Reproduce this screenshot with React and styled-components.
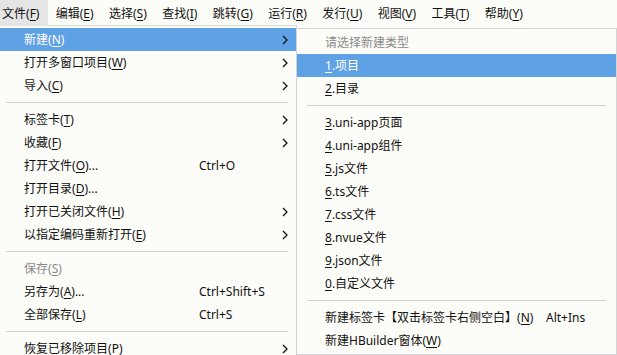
import styled, { createGlobalStyle } from "styled-components";

const GlobalStyle = createGlobalStyle`
  html, body {
    margin: 0;
    background: #fcfcf8;
    overflow: hidden;
  }
  body {
    font-family: "Noto Sans", "Noto Sans CJK SC", sans-serif;
    font-size: 12px;
    color: #111;
  }
`;

const mainItems = [
  { label: "新建", key: "N", arrow: true, active: true },
  { label: "打开多窗口项目", key: "W", arrow: true },
  { label: "导入", key: "C", arrow: true },
  "sep",
  { label: "标签卡", key: "T", arrow: true },
  { label: "收藏", key: "F", arrow: true },
  { label: "打开文件", key: "O", suffix: "...", shortcut: "Ctrl+O" },
  { label: "打开目录", key: "D", suffix: "..." },
  { label: "打开已关闭文件", key: "H", arrow: true },
  { label: "以指定编码重新打开", key: "E", arrow: true },
  "sep",
  { label: "保存", key: "S", disabled: true },
  { label: "另存为", key: "A", suffix: "...", shortcut: "Ctrl+Shift+S" },
  { label: "全部保存", key: "L", shortcut: "Ctrl+S" },
  "sep",
  { label: "恢复已移除项目", key: "P", arrow: true },
];

const subItems = [
  { num: "1", label: ".项目", active: true },
  { num: "2", label: ".目录" },
  "sep",
  { num: "3", label: ".uni-app页面" },
  { num: "4", label: ".uni-app组件" },
  { num: "5", label: ".js文件" },
  { num: "6", label: ".ts文件" },
  { num: "7", label: ".css文件" },
  { num: "8", label: ".nvue文件" },
  { num: "9", label: ".json文件" },
  { num: "0", label: ".自定义文件" },
  "sep",
  { label: "新建标签卡【双击标签卡右侧空白】", key: "N", shortcut: "Alt+Ins" },
  { label: "新建HBuilder窗体", key: "W" },
];

const barItems = [
  ["文件", "F"],
  ["编辑", "E"],
  ["选择", "S"],
  ["查找", "I"],
  ["跳转", "G"],
  ["运行", "R"],
  ["发行", "U"],
  ["视图", "V"],
  ["工具", "T"],
  ["帮助", "Y"],
];

const Screen = styled.div`
  position: relative;
  width: 617px;
  height: 355px;
  overflow: hidden;
`;

const MenuBar = styled.div`
  position: relative;
  z-index: 2;
  display: flex;
  height: 26px;
`;

const BarItem = styled.div`
  display: flex;
  align-items: center;
  padding: 0 7.7px;
  height: 26px;
  background: ${({ $open }) => ($open ? "#e5e5e5" : "transparent")};
  &:first-child {
    padding-left: 2px;
    padding-right: 8.5px;
  }
`;

const Key = styled.span`
  text-decoration: underline;
  text-underline-offset: 2px;
`;

const Dropdown = styled.div`
  position: absolute;
  top: 25px;
  left: 0;
  width: 296px;
  background: #fcfcf8;
  border-top: 1px solid #d9d9d9;
  border-right: 1px solid #d9d9d9;
  padding-top: 2px;
  z-index: 1;
`;

const SubMenu = styled.div`
  position: absolute;
  top: 28px;
  left: 296px;
  width: 319px;
  background: #fcfcf8;
  border: 1px solid #d4d4d4;
  padding: 2px 0;
  z-index: 3;
`;

const Row = styled.div`
  display: flex;
  align-items: center;
  height: 23px;
  line-height: 23px;
  padding-left: ${({ $indent }) => $indent}px;
  white-space: nowrap;
  background: ${({ $active }) => ($active ? "#5fa1e5" : "transparent")};
  color: ${({ $active, $muted }) =>
    $active ? "#fff" : $muted ? "#8a8a8a" : "#111"};
`;

const Label = styled.span`
  flex: 0 0 ${({ $w }) => $w}px;
`;

const Shortcut = styled.span`
  flex: 1;
`;

const Arrow = styled.span`
  display: flex;
  align-items: center;
  padding-right: 8px;
`;

const Separator = styled.div`
  height: 11px;
  display: flex;
  align-items: center;
  padding: 0 ${({ $r }) => $r}px 0 ${({ $l }) => $l}px;
  &::after {
    content: "";
    flex: 1;
    height: 1px;
    background: #d2d2d2;
  }
`;

const Chevron = () => (
  <svg width="6" height="10" viewBox="0 0 6 10">
    <polyline points="1,1 5,5 1,9" fill="none" stroke="#111" strokeWidth="1.3" />
  </svg>
);

export default function App() {
  return (
    <Screen>
      <GlobalStyle />
      <MenuBar>
        {barItems.map(([t, k], i) => (
          <BarItem key={t} $open={i === 0}>
            {t}(<Key>{k}</Key>)
          </BarItem>
        ))}
      </MenuBar>

      <Dropdown>
        {mainItems.map((it, i) =>
          it === "sep" ? (
            <Separator key={i} $l={6} $r={8} />
          ) : (
            <Row key={i} $indent={24} $active={it.active} $muted={it.disabled}>
              <Label $w={175}>
                {it.label}(<Key>{it.key}</Key>){it.suffix}
              </Label>
              <Shortcut>{it.shortcut}</Shortcut>
              {it.arrow && (
                <Arrow>
                  <Chevron />
                </Arrow>
              )}
            </Row>
          )
        )}
      </Dropdown>

      <SubMenu>
        <Row $indent={28} $muted>
          请选择新建类型
        </Row>
        {subItems.map((it, i) =>
          it === "sep" ? (
            <Separator key={i} $l={10} $r={10} />
          ) : (
            <Row key={i} $indent={28} $active={it.active}>
              <Label $w={221}>
                {it.num ? (
                  <>
                    <Key>{it.num}</Key>
                    {it.label}
                  </>
                ) : (
                  <>
                    {it.label}(<Key>{it.key}</Key>)
                  </>
                )}
              </Label>
              <Shortcut>{it.shortcut}</Shortcut>
            </Row>
          )
        )}
      </SubMenu>
    </Screen>
  );
}
